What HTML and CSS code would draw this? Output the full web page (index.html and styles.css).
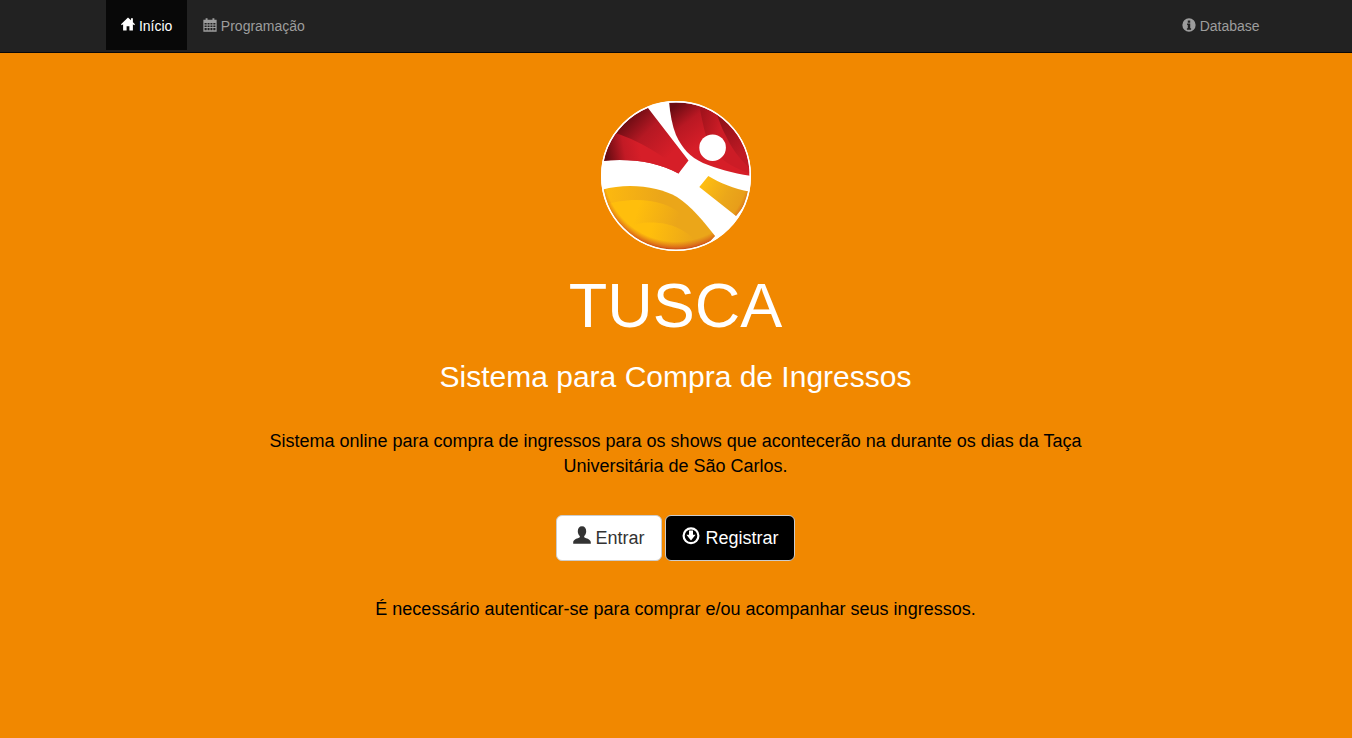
FILE: index.html
```html
<!DOCTYPE html>
<html lang="pt-BR">
<head>
<meta charset="utf-8">
<title>TUSCA</title>
<link rel="stylesheet" href="styles.css">
</head>
<body>
<nav class="navbar">
  <div class="nav-inner">
    <ul class="nav-list">
      <li><a class="nav-link active" href="#"><svg class="ico" viewBox="0 1.2 16 16"><path d="M8 0.6 L0 8.4 L0.9 9.4 L2.4 8.2 V15.6 H6.4 V10.6 H9.6 V15.6 H13.6 V8.2 L15.1 9.4 L16 8.4 L13.6 6 V1.6 H11.4 V3.9 Z" fill="currentColor"/></svg> Início</a></li>
      <li><a class="nav-link" href="#"><svg class="ico" viewBox="0 0 16 16"><path fill-rule="evenodd" d="M3 0.4h2.2v1.6h5.6V0.4H13v1.6h2.6V15.8H0.4V2H3Z M1.8 5.6v1.9h2.4V5.6Z M5.2 5.6v1.9h2.3V5.6Z M8.5 5.6v1.9h2.3V5.6Z M11.8 5.6v1.9h2.4V5.6Z M1.8 8.5v1.9h2.4V8.5Z M5.2 8.5v1.9h2.3V8.5Z M8.5 8.5v1.9h2.3V8.5Z M11.8 8.5v1.9h2.4V8.5Z M1.8 11.4v2.6h2.4v-2.6Z M5.2 11.4v2.6h2.3v-2.6Z M8.5 11.4v2.6h2.3v-2.6Z M11.8 11.4v2.6h2.4v-2.6Z" fill="currentColor"/></svg> Programação</a></li>
    </ul>
    <ul class="nav-list">
      <li><a class="nav-link" href="#"><svg class="ico" viewBox="0 0 16 16"><path fill-rule="evenodd" d="M8 0.4a7.6 7.6 0 1 0 0 15.2A7.6 7.6 0 0 0 8 0.4Z M6.6 2.8h2.8v2.6H6.6Z M5.8 6.4h3.6v5.2h1v1.7H5.6v-1.7h1V8.1h-0.8Z" fill="currentColor"/></svg> Database</a></li>
    </ul>
  </div>
</nav>
<main class="hero">
  <svg class="logo" viewBox="0 0 150 150" role="img" aria-label="Logo TUSCA">
    <defs>
      <clipPath id="disc"><circle cx="75" cy="75" r="73.6"/></clipPath>
      <linearGradient id="redMain" gradientUnits="userSpaceOnUse" x1="98" y1="44" x2="70" y2="8">
        <stop offset="0" stop-color="#d61e28"/><stop offset="0.55" stop-color="#b91823"/><stop offset="1" stop-color="#6a0b12"/>
      </linearGradient>
      <linearGradient id="redMid" gradientUnits="userSpaceOnUse" x1="98" y1="20" x2="128" y2="30">
        <stop offset="0" stop-color="#a2131c"/><stop offset="0.7" stop-color="#cc1c26"/>
      </linearGradient>
      <linearGradient id="redOuter" gradientUnits="userSpaceOnUse" x1="114" y1="22" x2="140" y2="54">
        <stop offset="0" stop-color="#8f1019"/><stop offset="1" stop-color="#bf1a24"/>
      </linearGradient>
      <linearGradient id="redBack" gradientUnits="userSpaceOnUse" x1="68" y1="55" x2="26" y2="14">
        <stop offset="0" stop-color="#d61e28"/><stop offset="0.55" stop-color="#b51823"/><stop offset="1" stop-color="#620b11"/>
      </linearGradient>
      <linearGradient id="redFront" gradientUnits="userSpaceOnUse" x1="38" y1="44" x2="4" y2="50">
        <stop offset="0" stop-color="#d61e28"/><stop offset="0.45" stop-color="#c21a25"/><stop offset="1" stop-color="#640b11"/>
      </linearGradient>
      <linearGradient id="yelBase" gradientUnits="userSpaceOnUse" x1="4" y1="88" x2="60" y2="92">
        <stop offset="0" stop-color="#fdb90f"/><stop offset="1" stop-color="#eba619"/>
      </linearGradient>
      <linearGradient id="yelMid" gradientUnits="userSpaceOnUse" x1="36" y1="110" x2="76" y2="122">
        <stop offset="0" stop-color="#ffbe0c"/><stop offset="1" stop-color="#eba619"/>
      </linearGradient>
      <linearGradient id="yelLow" gradientUnits="userSpaceOnUse" x1="50" y1="130" x2="92" y2="140">
        <stop offset="0" stop-color="#ffbe0c"/><stop offset="1" stop-color="#eba619"/>
      </linearGradient>
      <linearGradient id="yelRight" gradientUnits="userSpaceOnUse" x1="102" y1="80" x2="146" y2="102">
        <stop offset="0" stop-color="#ffbe10"/><stop offset="0.55" stop-color="#eba71a"/><stop offset="1" stop-color="#e69a1a"/>
      </linearGradient>
      <radialGradient id="rim" gradientUnits="userSpaceOnUse" cx="75" cy="68" r="80.6">
        <stop offset="0.9" stop-color="#d8641a" stop-opacity="0"/><stop offset="0.98" stop-color="#d4581a" stop-opacity="0.85"/><stop offset="1" stop-color="#bf3f18"/>
      </radialGradient>
    </defs>
    <circle cx="75" cy="75" r="75" fill="#fff"/>
    <g clip-path="url(#disc)">
      <path d="M68 0 C69 12 71 24 75 34 C81 47 89 56 102 62 C116 68 132 72 150 75 V0 Z" fill="url(#redMain)"/>
      <path d="M97 0 C100 12 102 25 105 35 C110 47 118 57 128 63 C135 67 142 70 150 73 V0 Z" fill="url(#redMid)"/>
      <path d="M112 0 C116 14 120 26 125 35 C130 46 138 58 150 68 V0 Z" fill="url(#redOuter)"/>
      <path d="M47 7 L87.5 59.5 L77.5 72.5 C56 61 30 57 0 60 V0 H44 Z" fill="url(#redBack)"/>
      <path d="M0 28 C24 33 56 48 79 70 L77.5 72.5 C56 61 30 57 0 60 Z" fill="url(#redFront)"/>
      <path d="M0 89 C28 81 58 86 76 96 C90 105 104 122 114 135 L100 150 H0 Z" fill="url(#yelBase)"/>
      <path d="M0 105 C16 99 42 96 62 103 C68 105 74 108 79 112 C86 120 92 132 97 145 L80 150 H0 Z" fill="url(#yelMid)"/>
      <path d="M24 127 C38 120 62 119 79 128 C90 134 96 140 100 146 L80 150 H30 Z" fill="url(#yelLow)"/>
      <path d="M107.3 75 L98.3 86 L135 115 L150 96 V91 C133 88 119 82 107.3 75 Z" fill="url(#yelRight)"/>
      <path d="M0 89 C28 81 58 86 76 96 C90 105 104 122 114 135 L100 150 H0 Z" fill="url(#rim)"/>
      <path d="M135 115 L150 96 V91 L140 89 L125 107 Z" fill="url(#rim)"/>
    </g>
    <circle cx="111.6" cy="46.7" r="13.3" fill="#fff"/>
    <circle cx="75" cy="75" r="74.3" fill="none" stroke="#fff" stroke-width="1.4"/>
  </svg>
  <h1 class="title">TUSCA</h1>
  <h2 class="subtitle">Sistema para Compra de Ingressos</h2>
  <p class="lead">Sistema online para compra de ingressos para os shows que acontecerão na durante os dias da Taça Universitária de São Carlos.</p>
  <div class="actions">
    <a class="btn btn-light" href="#"><svg class="ico-lg" viewBox="0 0 18 18"><path d="M9 0.3C6.2 0.3 4.8 2.4 4.8 5.2 C4.8 7.2 5.6 9 6.8 10 V11.2 C4.8 12.6 0.2 13 0.2 16.4 V17.8 H17.8 V16.4 C17.8 13 13.2 12.6 11.2 11.2 V10 C12.4 9 13.2 7.2 13.2 5.2 C13.2 2.4 11.8 0.3 9 0.3Z" fill="currentColor"/></svg> Entrar</a>
    <a class="btn btn-dark" href="#"><svg class="ico-lg" viewBox="0 -0.8 18 18"><circle cx="9" cy="9" r="7.4" fill="none" stroke="currentColor" stroke-width="2.2"/><path d="M7 3.8h4V8h2.6L9 13.6 4.4 8H7Z" fill="currentColor"/></svg> Registrar</a>
  </div>
  <p class="note">É necessário autenticar-se para comprar e/ou acompanhar seus ingressos.</p>
</main>
</body>
</html>
```
FILE: styles.css
```css
* { box-sizing: border-box; }
html, body { height: 100%; }
body {
  margin: 0;
  display: flex;
  flex-direction: column;
  background: #f18800;
  font-family: "Liberation Sans", Arial, sans-serif;
  font-size: 14px;
  line-height: 20px;
  color: #000;
  overflow: hidden;
}
.navbar {
  height: 53px;
  flex: none;
  background: #222;
  border-bottom: 1px solid #080808;
}
.nav-inner {
  width: 1183.6px;
  margin-left: 91px;
  padding-left: 15px;
  display: flex;
  justify-content: space-between;
}
.nav-list { list-style: none; margin: 0; padding: 0; display: flex; gap: 0.6px; }
.nav-link {
  display: block;
  height: 50px;
  padding: 16px 15px 14px;
  color: #9d9d9d;
  text-decoration: none;
  white-space: nowrap;
}
.nav-link.active { color: #fff; background: #080808; }
.ico { width: 14px; height: 14px; vertical-align: -1px; overflow: visible; }
.hero { flex: 1; display: flex; flex-direction: column; align-items: center; text-align: center; padding: 48px 1px 0 0; }
.logo { width: 150px; height: 150px; display: block; flex: none; margin-left: 1px; }
.title {
  margin: 20px 0 0;
  font-size: 63px;
  font-weight: 400;
  line-height: 69px;
  color: #fff;
}
.subtitle {
  margin: 20px 0 0;
  font-size: 30px;
  font-weight: 400;
  line-height: 33px;
  color: #fff;
}
.lead {
  width: 840px;
  margin: 36px 0 0;
  font-size: 18px;
  line-height: 25px;
}
.actions { display: flex; gap: 3.9px; margin-top: 36px; }
.btn {
  display: block;
  height: 46px;
  padding: 10px 16px;
  border: 1px solid #ccc;
  border-radius: 6px;
  font-size: 18px;
  line-height: 24px;
  text-decoration: none;
  white-space: nowrap;
}
.btn-light { background: #fff; color: #333; }
.btn-dark { background: #000; color: #fff; }
.ico-lg { width: 18px; height: 18px; vertical-align: 0; overflow: visible; }
.note { margin: 36px 0 0; font-size: 18px; line-height: 25px; }
```
